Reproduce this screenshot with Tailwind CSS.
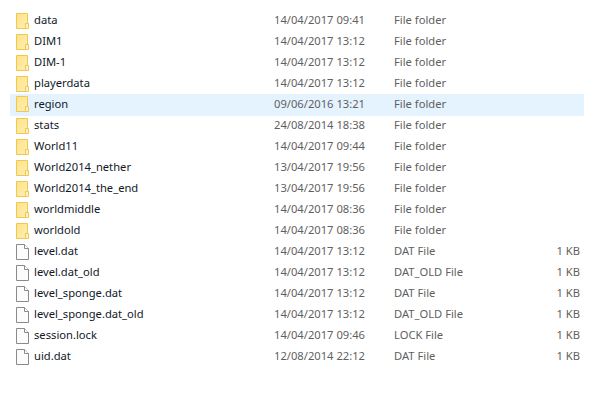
<!DOCTYPE html>
<html><head><meta charset="utf-8"><script src="https://cdn.jsdelivr.net/npm/@tailwindcss/browser@4"></script></head>
<body class="bg-white">
<div class="w-[613px] h-[406px] overflow-hidden bg-white pt-[10px] pl-[10px] font-['Noto_Sans',sans-serif] text-[11.2px] leading-[21px] text-[#1a1a1a] [&_span]:-translate-y-px">
<svg width="0" height="0" class="absolute"><defs>
<linearGradient id="g" x1="0" y1="0" x2="1" y2="1"><stop offset="0" stop-color="#fde287"/><stop offset="1" stop-color="#ffefb5"/></linearGradient>
<symbol id="fo" viewBox="0 0 13 16"><path d="M.5.5H11.5V15.5H.5Z" fill="url(#g)" stroke="#efc94f"/><path d="M9.5 15.5V10.5H12.5V15.5Z" fill="#fff3c4" stroke="#efc94f"/></symbol>
<symbol id="fi" viewBox="0 0 13 16"><path d="M.5.5H8.5L12.5 4.5V15.5H.5Z" fill="#fcfcfc" stroke="#8a8a8a"/><path d="M8.5.5V4.5H12.5" fill="#fff" stroke="#8a8a8a"/></symbol>
</defs></svg>
<div class="flex items-center h-[21px] w-[574px]"><svg class="ml-[6px] w-[13px] h-4"><use href="#fo"/></svg><span class="ml-[5px] w-[240px] text-[#111827]">data</span><span class="w-[120px] text-[#5f5f5f]">14/04/2017 09:41</span><span class="text-[#5f5f5f]">File folder</span></div>
<div class="flex items-center h-[21px] w-[574px]"><svg class="ml-[6px] w-[13px] h-4"><use href="#fo"/></svg><span class="ml-[5px] w-[240px] text-[#111827]">DIM1</span><span class="w-[120px] text-[#5f5f5f]">14/04/2017 13:12</span><span class="text-[#5f5f5f]">File folder</span></div>
<div class="flex items-center h-[21px] w-[574px]"><svg class="ml-[6px] w-[13px] h-4"><use href="#fo"/></svg><span class="ml-[5px] w-[240px] text-[#111827]">DIM-1</span><span class="w-[120px] text-[#5f5f5f]">14/04/2017 13:12</span><span class="text-[#5f5f5f]">File folder</span></div>
<div class="flex items-center h-[21px] w-[574px]"><svg class="ml-[6px] w-[13px] h-4"><use href="#fo"/></svg><span class="ml-[5px] w-[240px] text-[#111827]">playerdata</span><span class="w-[120px] text-[#5f5f5f]">14/04/2017 13:12</span><span class="text-[#5f5f5f]">File folder</span></div>
<div class="flex items-start h-[22px] mb-[-1px] w-[574px] bg-[#e5f3ff]"><svg class="ml-[6px] mt-[2px] w-[13px] h-4"><use href="#fo"/></svg><span class="ml-[5px] w-[240px] text-[#111827]">region</span><span class="w-[120px] text-[#5f5f5f]">09/06/2016 13:21</span><span class="text-[#5f5f5f]">File folder</span></div>
<div class="flex items-center h-[21px] w-[574px]"><svg class="ml-[6px] w-[13px] h-4"><use href="#fo"/></svg><span class="ml-[5px] w-[240px] text-[#111827]">stats</span><span class="w-[120px] text-[#5f5f5f]">24/08/2014 18:38</span><span class="text-[#5f5f5f]">File folder</span></div>
<div class="flex items-center h-[21px] w-[574px]"><svg class="ml-[6px] w-[13px] h-4"><use href="#fo"/></svg><span class="ml-[5px] w-[240px] text-[#111827]">World11</span><span class="w-[120px] text-[#5f5f5f]">14/04/2017 09:44</span><span class="text-[#5f5f5f]">File folder</span></div>
<div class="flex items-center h-[21px] w-[574px]"><svg class="ml-[6px] w-[13px] h-4"><use href="#fo"/></svg><span class="ml-[5px] w-[240px] text-[#111827]">World2014_nether</span><span class="w-[120px] text-[#5f5f5f]">13/04/2017 19:56</span><span class="text-[#5f5f5f]">File folder</span></div>
<div class="flex items-center h-[21px] w-[574px]"><svg class="ml-[6px] w-[13px] h-4"><use href="#fo"/></svg><span class="ml-[5px] w-[240px] text-[#111827]">World2014_the_end</span><span class="w-[120px] text-[#5f5f5f]">13/04/2017 19:56</span><span class="text-[#5f5f5f]">File folder</span></div>
<div class="flex items-center h-[21px] w-[574px]"><svg class="ml-[6px] w-[13px] h-4"><use href="#fo"/></svg><span class="ml-[5px] w-[240px] text-[#111827]">worldmiddle</span><span class="w-[120px] text-[#5f5f5f]">14/04/2017 08:36</span><span class="text-[#5f5f5f]">File folder</span></div>
<div class="flex items-center h-[21px] w-[574px]"><svg class="ml-[6px] w-[13px] h-4"><use href="#fo"/></svg><span class="ml-[5px] w-[240px] text-[#111827]">worldold</span><span class="w-[120px] text-[#5f5f5f]">14/04/2017 08:36</span><span class="text-[#5f5f5f]">File folder</span></div>
<div class="flex items-center h-[21px] w-[574px]"><svg class="ml-[6px] w-[13px] h-4"><use href="#fi"/></svg><span class="ml-[5px] w-[240px] text-[#111827]">level.dat</span><span class="w-[120px] text-[#5f5f5f]">14/04/2017 13:12</span><span class="w-[120px] text-[#5f5f5f]">DAT File</span><span class="w-[66px] text-right text-[#5f5f5f]">1 KB</span></div>
<div class="flex items-center h-[21px] w-[574px]"><svg class="ml-[6px] w-[13px] h-4"><use href="#fi"/></svg><span class="ml-[5px] w-[240px] text-[#111827]">level.dat_old</span><span class="w-[120px] text-[#5f5f5f]">14/04/2017 13:12</span><span class="w-[120px] text-[#5f5f5f]">DAT_OLD File</span><span class="w-[66px] text-right text-[#5f5f5f]">1 KB</span></div>
<div class="flex items-center h-[21px] w-[574px]"><svg class="ml-[6px] w-[13px] h-4"><use href="#fi"/></svg><span class="ml-[5px] w-[240px] text-[#111827]">level_sponge.dat</span><span class="w-[120px] text-[#5f5f5f]">14/04/2017 13:12</span><span class="w-[120px] text-[#5f5f5f]">DAT File</span><span class="w-[66px] text-right text-[#5f5f5f]">1 KB</span></div>
<div class="flex items-center h-[21px] w-[574px]"><svg class="ml-[6px] w-[13px] h-4"><use href="#fi"/></svg><span class="ml-[5px] w-[240px] text-[#111827]">level_sponge.dat_old</span><span class="w-[120px] text-[#5f5f5f]">14/04/2017 13:12</span><span class="w-[120px] text-[#5f5f5f]">DAT_OLD File</span><span class="w-[66px] text-right text-[#5f5f5f]">1 KB</span></div>
<div class="flex items-center h-[21px] w-[574px]"><svg class="ml-[6px] w-[13px] h-4"><use href="#fi"/></svg><span class="ml-[5px] w-[240px] text-[#111827]">session.lock</span><span class="w-[120px] text-[#5f5f5f]">14/04/2017 09:46</span><span class="w-[120px] text-[#5f5f5f]">LOCK File</span><span class="w-[66px] text-right text-[#5f5f5f]">1 KB</span></div>
<div class="flex items-center h-[21px] w-[574px]"><svg class="ml-[6px] w-[13px] h-4"><use href="#fi"/></svg><span class="ml-[5px] w-[240px] text-[#111827]">uid.dat</span><span class="w-[120px] text-[#5f5f5f]">12/08/2014 22:12</span><span class="w-[120px] text-[#5f5f5f]">DAT File</span><span class="w-[66px] text-right text-[#5f5f5f]">1 KB</span></div>
</div>
</body></html>
